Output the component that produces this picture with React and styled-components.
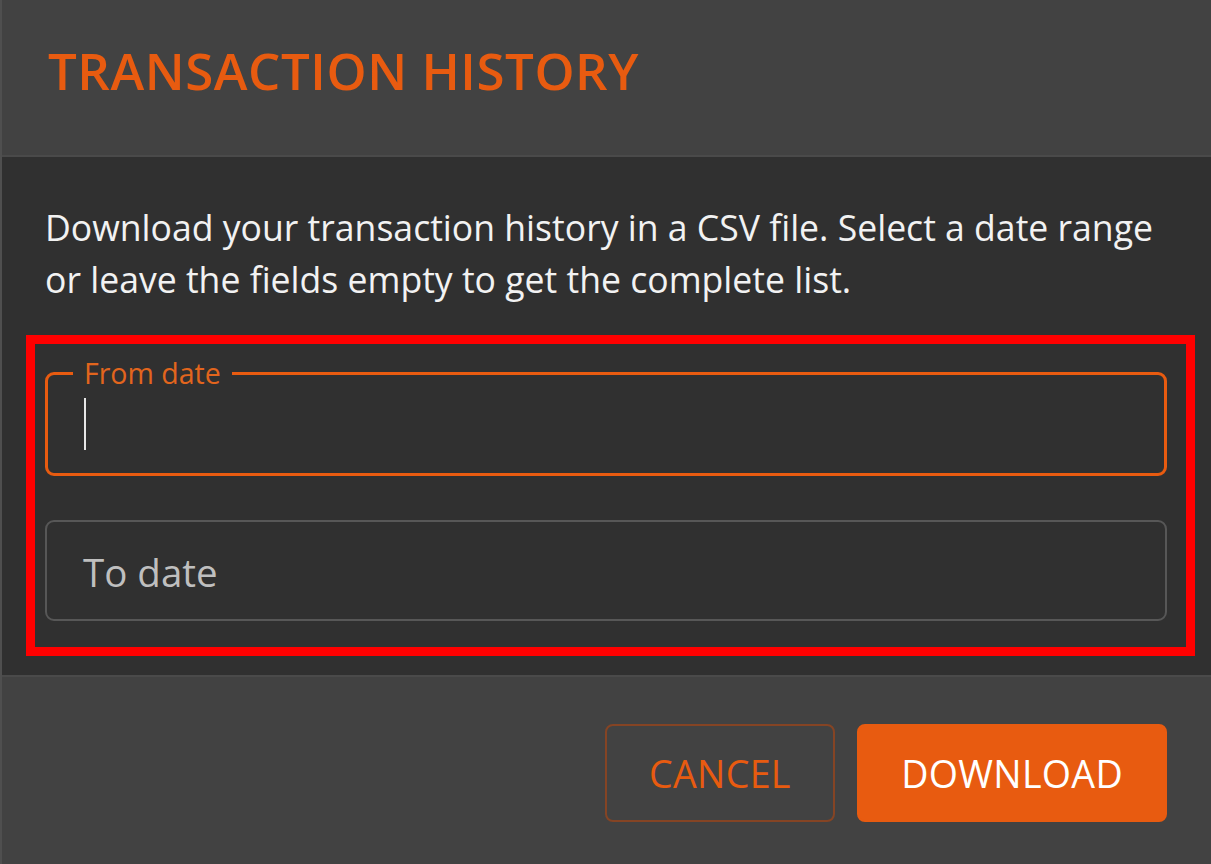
import React from 'react';
import styled, { createGlobalStyle } from 'styled-components';

const orange = '#e85b10';

const GlobalStyle = createGlobalStyle`
    html, body {
        margin: 0;
        padding: 0;
        background: #424242;
        overflow: hidden;
    }
    * {
        box-sizing: border-box;
    }
`;

const Dialog = styled.div`
    width: 1211px;
    height: 864px;
    display: flex;
    flex-direction: column;
    border-left: 2px solid #4f4f4f;
    background: #424242;
    font-family: "Open Sans", "Liberation Sans", sans-serif;
`;

const Header = styled.header`
    height: 155px;
    padding: 45px 44px 0 46px;
    background: #424242;

    h2 {
        margin: 0;
        font-size: 51px;
        line-height: 51px;
        font-weight: 600;
        letter-spacing: 0.55px;
        text-transform: uppercase;
        color: ${orange};
    }
`;

const Content = styled.div`
    background: #303030;
    border-top: 2px solid #4a4a4a;
    border-bottom: 2px solid #4a4a4a;
    padding: 44px 44px 19px 43px;
`;

const Description = styled.p`
    margin: 0 0 30px;
    font-size: 35.6px;
    line-height: 52px;
    color: #f2f2f2;
`;

// highlight frame drawn around the date fields
const Highlight = styled.div`
    margin: 0 -28px 0 -19px;
    padding: 15px 19px 26px 10px;
    border: 9px solid #ff0000;
    display: flex;
    flex-direction: column;
    gap: 44px;
`;

const Fieldset = styled.fieldset`
    margin: 0;
    padding: 0 25px;
    border: 3px solid ${orange};
    border-radius: 9px;

    legend {
        padding: 0 11px;
        font-size: 28.5px;
        line-height: 28px;
        color: #e2651d;
    }
`;

const InputArea = styled.div`
    padding: 11px 11px 23px;
    height: 86px;
`;

const Caret = styled.span`
    display: block;
    width: 2px;
    height: 52px;
    background: #e6e6e6;
`;

const Field = styled.div`
    height: 101px;
    padding: 31px 36px 0;
    border: 2px solid #575757;
    border-radius: 9px;
    font-size: 38.5px;
    line-height: 38px;
    color: #bfbfbf;
`;

const Footer = styled.footer`
    flex: 1;
    display: flex;
    justify-content: flex-end;
    align-items: flex-start;
    gap: 22px;
    padding: 47px 44px 0 0;
    background: #424242;
`;

const Button = styled.button`
    height: 98px;
    padding: 0 ${p => p.primary ? 42 : 42.5}px;
    border-radius: 8px;
    border: 2px solid ${p => p.primary ? orange : '#854424'};
    background: ${p => p.primary ? orange : 'transparent'};
    color: ${p => p.primary ? '#ffffff' : orange};
    font-family: "Open Sans", "Liberation Sans", sans-serif;
    font-size: 37.6px;
    font-weight: 400;
    letter-spacing: 0.3px;
    text-transform: uppercase;
    cursor: pointer;
`;

const App = () => {
    return (
        <>
            <GlobalStyle />
            <Dialog>
                <Header>
                    <h2>Transaction History</h2>
                </Header>
                <Content>
                    <Description>
                        Download your transaction history in a CSV file. Select a date range or leave the fields empty to get the complete list.
                    </Description>
                    <Highlight>
                        <Fieldset>
                            <legend>From date</legend>
                            <InputArea>
                                <Caret />
                            </InputArea>
                        </Fieldset>
                        <Field>To date</Field>
                    </Highlight>
                </Content>
                <Footer>
                    <Button>Cancel</Button>
                    <Button primary>Download</Button>
                </Footer>
            </Dialog>
        </>
    );
};

export default App;
